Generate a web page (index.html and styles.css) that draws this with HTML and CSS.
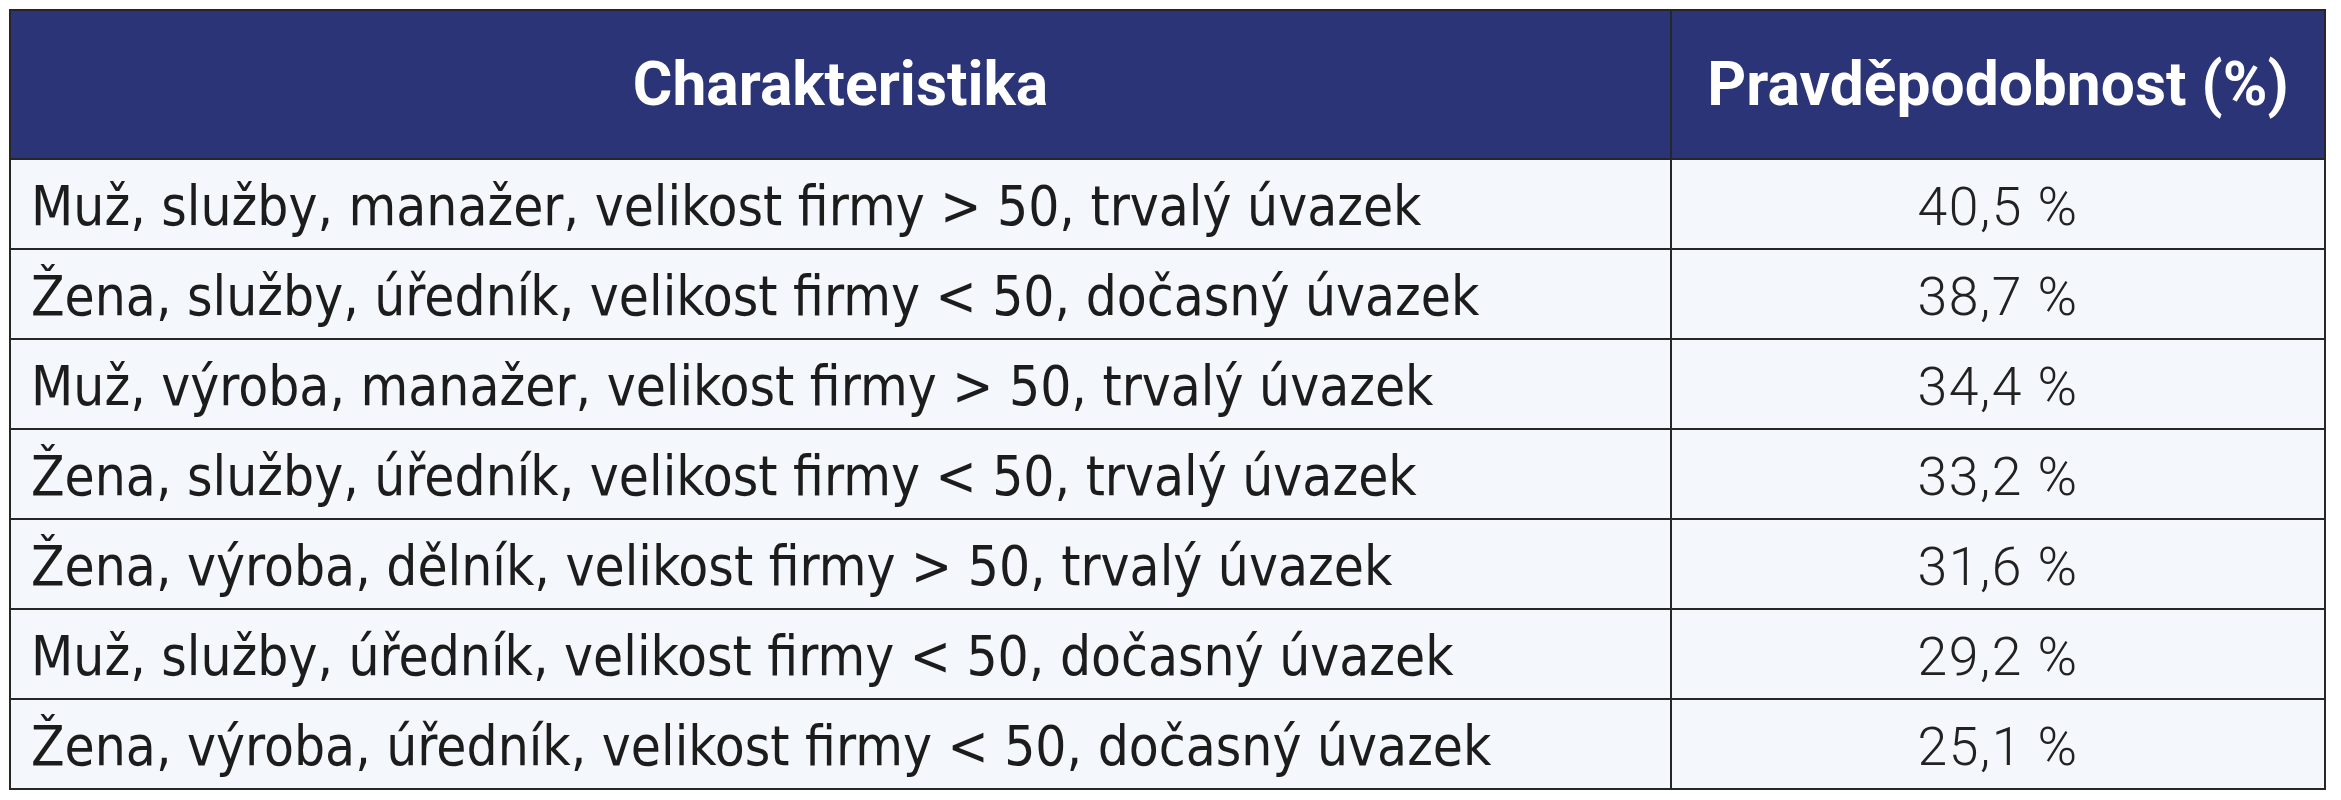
FILE: index.html
```html
<!DOCTYPE html>
<html lang="cs">
<head>
<meta charset="utf-8">
<title>Pravděpodobnost</title>
<link rel="stylesheet" href="styles.css">
</head>
<body>
<div class="wrap">
<table class="prob">
  <thead>
    <tr>
      <th class="c-char">Charakteristika</th>
      <th class="c-val">Pravděpodobnost (%)</th>
    </tr>
  </thead>
  <tbody>
    <tr><td class="c-char">Muž, služby, manažer, velikost firmy &gt; 50, trvalý úvazek</td><td class="c-val">40,5 %</td></tr>
    <tr><td class="c-char">Žena, služby, úředník, velikost firmy &lt; 50, dočasný úvazek</td><td class="c-val">38,7 %</td></tr>
    <tr><td class="c-char">Muž, výroba, manažer, velikost firmy &gt; 50, trvalý úvazek</td><td class="c-val">34,4 %</td></tr>
    <tr><td class="c-char">Žena, služby, úředník, velikost firmy &lt; 50, trvalý úvazek</td><td class="c-val">33,2 %</td></tr>
    <tr><td class="c-char">Žena, výroba, dělník, velikost firmy &gt; 50, trvalý úvazek</td><td class="c-val">31,6 %</td></tr>
    <tr><td class="c-char">Muž, služby, úředník, velikost firmy &lt; 50, dočasný úvazek</td><td class="c-val">29,2 %</td></tr>
    <tr><td class="c-char">Žena, výroba, úředník, velikost firmy &lt; 50, dočasný úvazek</td><td class="c-val">25,1 %</td></tr>
  </tbody>
</table>
</div>
</body>
</html>
```
FILE: styles.css
```css
html, body {
  margin: 0;
  padding: 0;
  background: #ffffff;
}

.wrap {
  padding: 9px 0 0 9px;
}

.prob {
  width: 2317px;
  table-layout: fixed;
  border-collapse: separate;
  border-spacing: 0;
  border-top: 2px solid #262626;
  border-left: 2px solid #262626;
}

.prob th,
.prob td {
  box-sizing: border-box;
  border-right: 2px solid #262626;
  border-bottom: 2px solid #262626;
  padding: 0;
  vertical-align: middle;
}

.prob th {
  height: 149px;
  background: #2b3476;
  color: #ffffff;
  font-family: Roboto, "Liberation Sans", sans-serif;
  font-weight: 700;
  font-size: 60.5px;
  text-align: center;
  white-space: nowrap;
}

.prob th.c-char {
  width: 1661px;
}

.prob td {
  height: 90px;
  background: #f4f8fc;
  color: #1c1c1c;
  padding-top: 4px;
  white-space: nowrap;
}

.prob td.c-char {
  font-family: "DejaVu Sans Condensed", "DejaVu Sans", sans-serif;
  font-size: 54.5px;
  padding-left: 20px;
  text-align: left;
}

.prob td.c-val {
  font-family: Roboto, "Liberation Sans", sans-serif;
  font-weight: 300;
  font-size: 53.5px;
  letter-spacing: 1.5px;
  color: #222222;
  text-align: center;
}
```
